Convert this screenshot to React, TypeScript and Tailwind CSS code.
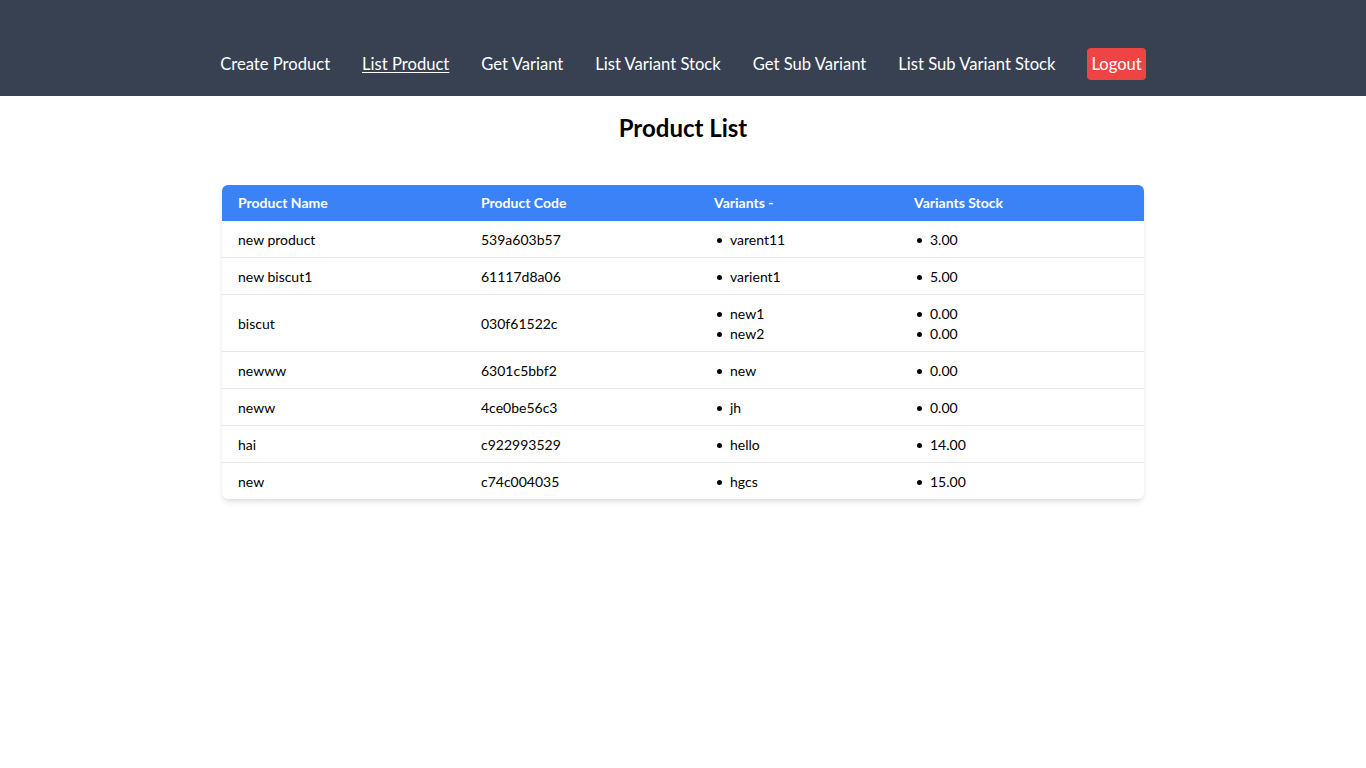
import React from "react";

interface Product {
  name: string;
  code: string;
  variants: string[];
  stock: string[];
}

const products: Product[] = [
  { name: "new product", code: "539a603b57", variants: ["varent11"], stock: ["3.00"] },
  { name: "new biscut1", code: "61117d8a06", variants: ["varient1"], stock: ["5.00"] },
  { name: "biscut", code: "030f61522c", variants: ["new1", "new2"], stock: ["0.00", "0.00"] },
  { name: "newww", code: "6301c5bbf2", variants: ["new"], stock: ["0.00"] },
  { name: "neww", code: "4ce0be56c3", variants: ["jh"], stock: ["0.00"] },
  { name: "hai", code: "c922993529", variants: ["hello"], stock: ["14.00"] },
  { name: "new", code: "c74c004035", variants: ["hgcs"], stock: ["15.00"] },
];

const links = [
  "Create Product",
  "List Product",
  "Get Variant",
  "List Variant Stock",
  "Get Sub Variant",
  "List Sub Variant Stock",
];

// petite liste à puces
const BulletList: React.FC<{ items: string[] }> = ({ items }) => (
  <ul>
    {items.map((it, j) => (
      <li key={j} className="flex items-center">
        <span className="w-[5px] h-[5px] rounded-full bg-black ml-[3px] mr-[8px]" />
        <span>{it}</span>
      </li>
    ))}
  </ul>
);

const App: React.FC = () => {
  return (
    <div className="min-h-screen bg-white font-['Lato','Noto_Sans',sans-serif] text-black">
      {/* barre de navigation */}
      <header className="bg-[#374151] h-24 pt-12">
        <nav className="flex items-center justify-center gap-8 h-8 text-[16.6px] text-white">
          {links.map((l) => (
            <a key={l} href="#" className={l === "List Product" ? "underline underline-offset-2" : ""}>
              {l}
            </a>
          ))}
          <button className="bg-[#ef4444] text-white rounded px-1 h-8">Logout</button>
        </nav>
      </header>

      <main>
        <h1 className="text-2xl font-bold text-center mt-4 leading-8">Product List</h1>

        <div className="w-[922px] mx-auto mt-[41px] rounded-md shadow-md overflow-hidden">
          <table className="w-full text-sm text-left border-collapse">
            <thead className="bg-[#3b82f6] text-white">
              <tr>
                <th className="w-[243px] px-4 py-2 font-bold">Product Name</th>
                <th className="w-[233px] px-4 py-2 font-bold">Product Code</th>
                <th className="w-[200px] px-4 py-2 font-bold">Variants -</th>
                <th className="px-4 py-2 font-bold">Variants Stock</th>
              </tr>
            </thead>
            <tbody>
              {products.map((p, i) => (
                <tr key={p.code} className={i < products.length - 1 ? "border-b border-[#e5e7eb]" : ""}>
                  <td className="px-4 pt-[9px] pb-[7px]">{p.name}</td>
                  <td className="px-4 pt-[9px] pb-[7px]">{p.code}</td>
                  <td className="px-4 pt-[9px] pb-[7px]">
                    <BulletList items={p.variants} />
                  </td>
                  <td className="px-4 pt-[9px] pb-[7px]">
                    <BulletList items={p.stock} />
                  </td>
                </tr>
              ))}
            </tbody>
          </table>
        </div>
      </main>
    </div>
  );
};

export default App;
